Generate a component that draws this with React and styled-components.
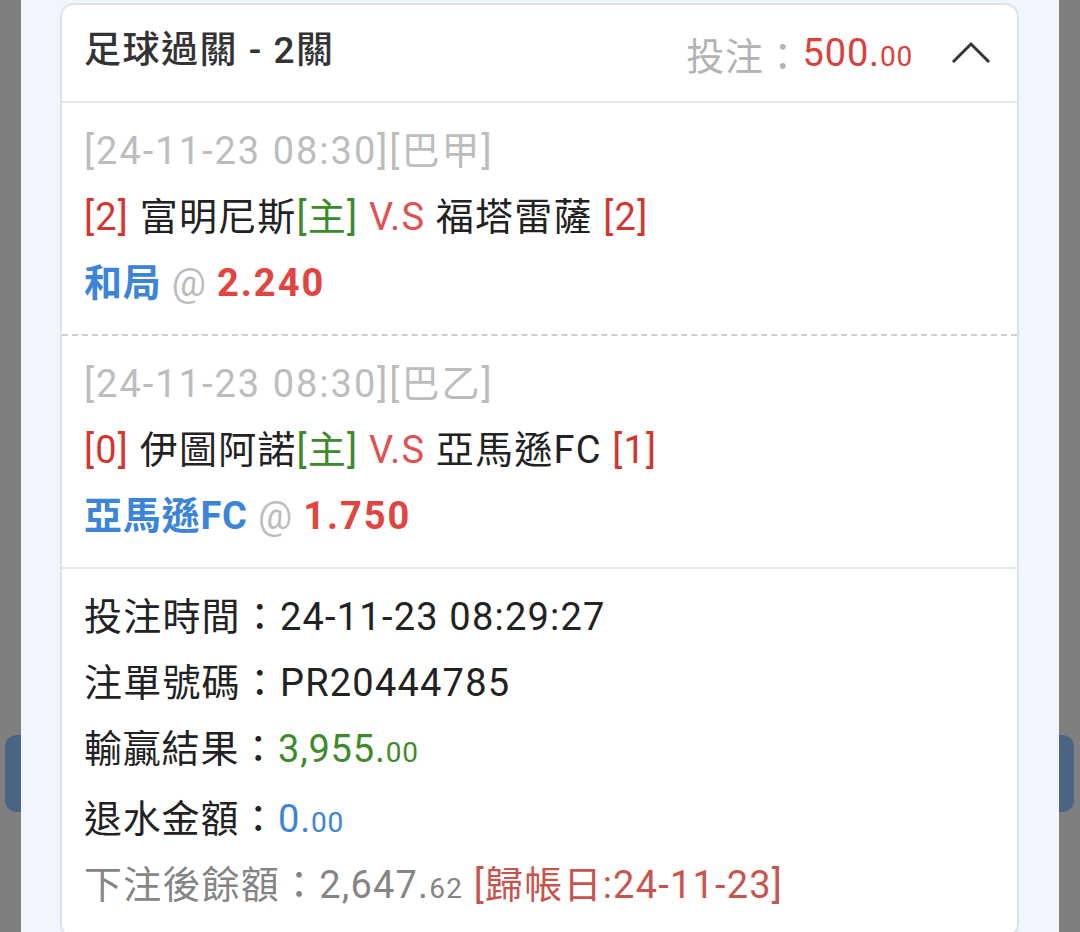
import React from 'react'
import styled, { createGlobalStyle } from 'styled-components'

const GlobalStyle = createGlobalStyle`
    html, body {
        margin: 0;
        padding: 0;
        background: #7f7f7f;
        font-family: Roboto, "Noto Sans CJK TC", sans-serif;
        overflow: hidden;
    }
`

const legs = [
    {
        time: '24-11-23 08:30',
        league: '巴甲',
        homeScore: 2,
        home: '富明尼斯',
        away: '福塔雷薩',
        awayScore: 2,
        pick: '和局',
        odds: '2.240',
    },
    {
        time: '24-11-23 08:30',
        league: '巴乙',
        homeScore: 0,
        home: '伊圖阿諾',
        away: '亞馬遜FC',
        awayScore: 1,
        pick: '亞馬遜FC',
        odds: '1.750',
    },
]

const Money = ({ value, color }) => {
    const [whole, cents] = value.split('.')
    return (
        <Amount color={color}>
            {whole}.<Cents>{cents}</Cents>
        </Amount>
    )
}

const App = () => {
    return (
        <>
            <GlobalStyle />
            <Page lang="zh-Hant-TW">
                <SideTab side="left" />
                <SideTab side="right" />
                <Panel>
                    <Card>
                        <Header>
                            <Title>足球過關 - 2關</Title>
                            <HeaderRight>
                                <Muted>投注：</Muted>
                                <Money value="500.00" color="#d9423c" />
                                <Chevron viewBox="0 0 40 24">
                                    <polyline points="2,22 20,4 38,22" fill="none" stroke="#333" strokeWidth="3" />
                                </Chevron>
                            </HeaderRight>
                        </Header>

                        {legs.map((leg, i) => (
                            <Leg key={i} dashed={i > 0}>
                                <Line color="#bdbdbd" spacing={2}>[{leg.time}][{leg.league}]</Line>
                                <Line spacing={1.2}>
                                    <Red>[{leg.homeScore}]</Red> {leg.home}
                                    <Green>[主]</Green> <Vs>V.S</Vs> {leg.away}{' '}
                                    <Red>[{leg.awayScore}]</Red>
                                </Line>
                                <Line>
                                    <Pick>{leg.pick}</Pick> <At>@</At> <Odds>{leg.odds}</Odds>
                                </Line>
                            </Leg>
                        ))}

                        <Info>
                            <Line spacing={1.2}>投注時間：24-11-23 08:29:27</Line>
                            <Line spacing={1.2}>注單號碼：PR20444785</Line>
                            <Line>
                                輸贏結果：<Money value="3,955.00" color="#3f8a2c" />
                            </Line>
                            <Line>
                                退水金額：<Money value="0.00" color="#3b84d8" />
                            </Line>
                            <Line color="#858585" spacing={1.2} tight>
                                下注後餘額：2,647.<Cents>62</Cents>{' '}
                                <Settle>[歸帳日:24-11-23]</Settle>
                            </Line>
                        </Info>
                    </Card>
                </Panel>
            </Page>
        </>
    )
}

export default App

const Page = styled.div`
    position: relative;
    height: 932px;
    padding: 0 21px;
    box-sizing: border-box;
`

const SideTab = styled.div`
    position: absolute;
    top: 735px;
    ${props => props.side === 'left' ? 'left: 5px;' : 'right: 6px;'}
    width: 30px;
    height: 77px;
    border-radius: 12px;
    background: #4a6484;
`

const Panel = styled.div`
    position: relative;
    z-index: 1;
    height: 100%;
    background: #f1f6fd;
    padding: 3px 40px 0 39px;
    box-sizing: border-box;
`

const Card = styled.div`
    background: #fff;
    border: 2px solid #dfe3e9;
    border-radius: 14px;
    overflow: hidden;
`

const Header = styled.div`
    height: 96px;
    display: flex;
    align-items: center;
    justify-content: space-between;
    padding: 0 26px 0 22px;
    border-bottom: 2px solid #e4e7eb;
`

const Title = styled.div`
    font-size: 37px;
    font-weight: 500;
    color: #333;
    padding-bottom: 12px;
    letter-spacing: 1.5px;
`

const HeaderRight = styled.div`
    display: flex;
    align-items: center;
    font-size: 38px;
    letter-spacing: 0.8px;
`

const Muted = styled.span`
    color: #b3b3b3;
`

const Amount = styled.span`
    color: ${props => props.color};
`

const Cents = styled.span`
    font-size: 28px;
`

const Chevron = styled.svg`
    width: 40px;
    height: 24px;
    margin-left: 38px;
    margin-top: -2px;
`

const Leg = styled.div`
    padding: 15px 22px 18px;
    border-top: ${props => props.dashed ? '2px dashed #cfcfcf' : 'none'};
`

const Line = styled.div`
    font-size: 38px;
    letter-spacing: ${props => props.spacing ?? 0.8}px;
    line-height: 66px;
    margin-top: ${props => props.tight ? '-4px' : '0'};
    color: ${props => props.color || '#222'};
    white-space: nowrap;
`

const Red = styled.span`
    color: #d5352f;
`

const Green = styled.span`
    color: #3d8a2d;
`

const Vs = styled.span`
    color: #e05252;
`

const Pick = styled.span`
    color: #3b84d8;
    font-weight: 700;
`

const At = styled.span`
    color: #bdbdbd;
`

const Odds = styled.span`
    color: #e0463f;
    font-weight: 700;
    letter-spacing: 2px;
`

const Info = styled.div`
    padding: 15px 22px 14px;
    border-top: 2px solid #e4e7eb;
`

const Settle = styled.span`
    color: #c8544e;
`
